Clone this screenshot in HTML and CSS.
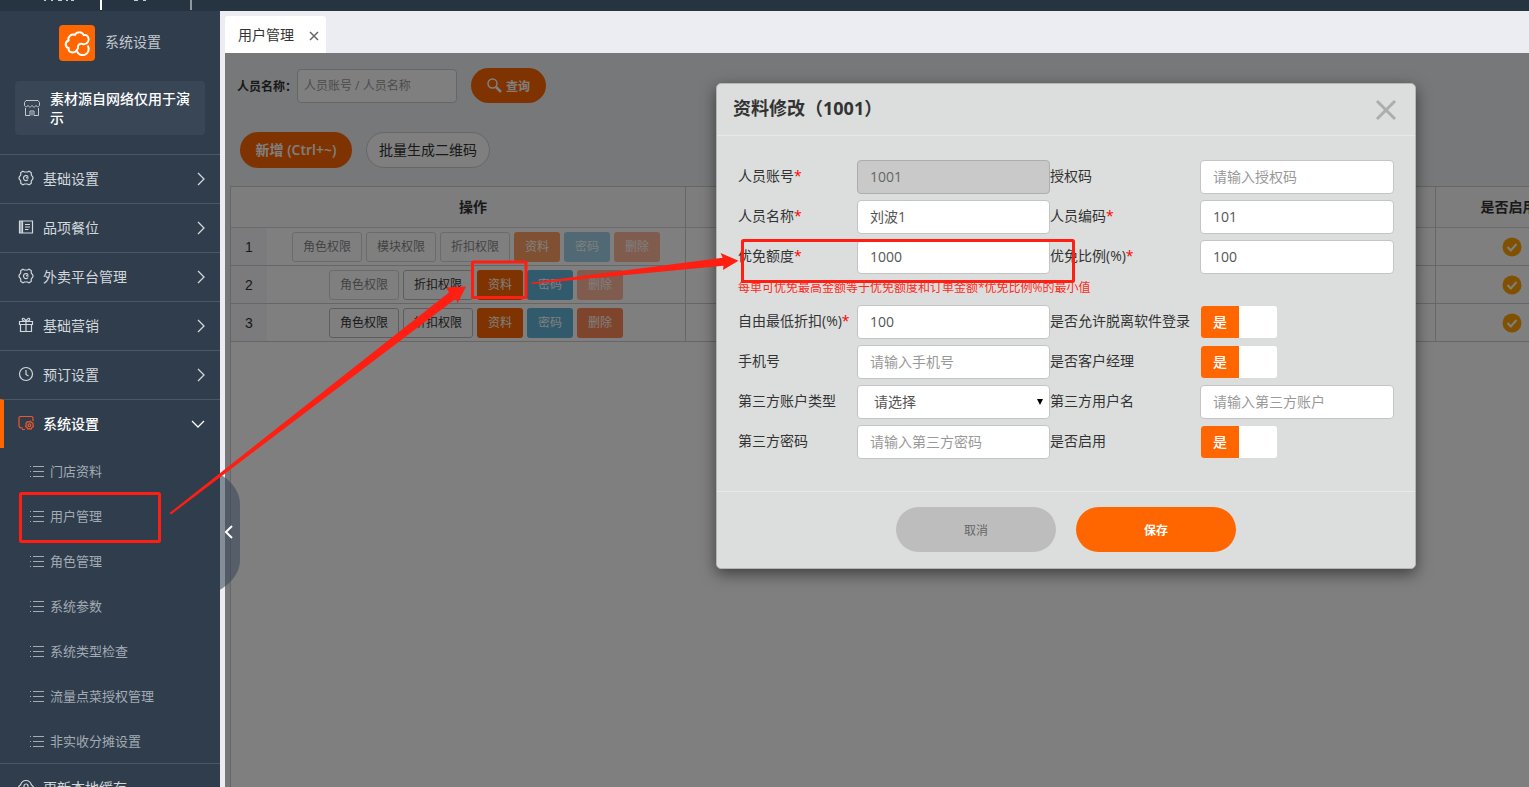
FILE: index.html
```html
<!DOCTYPE html>
<html lang="zh-CN">
<head>
<meta charset="utf-8">
<title>用户管理</title>
<link rel="stylesheet" href="styles.css">
</head>
<body>
<svg class="defs" aria-hidden="true">
  <symbol id="gear" viewBox="0 0 16 16"><path d="M5 1.2 6.500 2h3L11 1.200 13.200 2.600 13.300 5l1.600 2.200v1.600L13.300 11l-.1 2.400L11 14.800 9.500 14h-3L5 14.800 2.800 13.400 2.700 11 1.100 8.800V7.200L2.700 5l.1-2.400z"/><path d="M10.200 6.800A2.500 2.500 0 1 0 10 9.600M8 7.600l2.600.6"/></symbol>
  <symbol id="doc" viewBox="0 0 16 16"><path d="M4.500 2h10v12h-10zM4.500 14h-3V2h3M3 2v12M7 5.500h5M7 8h5M7 10.500h3.500"/></symbol>
  <symbol id="gift" viewBox="0 0 16 16"><path d="M1.500 4.500h13v3h-13zM2.500 7.500v7h11v-7M8 4.500v10M8 4.300C6 4.300 4 3.500 4.300 2S7 1.200 8 4.300C9 1.200 11.400.500 11.700 2S10 4.300 8 4.300"/></symbol>
  <symbol id="clock" viewBox="0 0 16 16"><circle cx="8" cy="8" r="6.500"/><path d="M8 4v4.500l2.500 1.500"/></symbol>
  <symbol id="system" viewBox="0 0 16 16"><path d="M5 13H3.500A2.500 2.500 0 0 1 1 10.500V3a1.500 1.500 0 0 1 1.500-1.500h11A1.500 1.500 0 0 1 15 3v3M4 14.500h3"/><path d="m9.300 6.700 1.700.3 1.500-.8.9 1.300 1.600.7-.1 1.700.6 1.500-1.500 1-.9 1.600-1.700-.4-1.600.4-.8-1.500-1.400-1 .5-1.600-.1-1.600z"/><circle cx="11.400" cy="10.200" r="1.400"/></symbol>
  <symbol id="cloud" viewBox="0 0 16 16"><path d="M3.500 13A3.700 3.700 0 0 1 2.500 6C3.500 3 5.500 1.500 8 1.500S12.500 3 13.500 6a3.700 3.700 0 0 1-1 7M6 9V7a2 2 0 0 1 4 0v2"/></symbol>
  <symbol id="next" viewBox="0 0 8 14"><path d="m1 1 6 6-6 6"/></symbol>
  <symbol id="down" viewBox="0 0 14 8"><path d="m1 1 6 6 6-6"/></symbol>
  <symbol id="list" viewBox="0 0 14 12"><path d="M3 1.500h11M3 6.500h11M3 11.500h11M0 1.500h1M0 6.500h1M0 11.500h1"/></symbol>
  <symbol id="check" viewBox="0 0 20 20"><circle cx="10" cy="10" r="9.500" fill="#ffa200"/><path d="m5.500 10 3.300 3.500L14.500 7" fill="none" stroke="#fff" stroke-width="2"/></symbol>
</svg>

<header class="topbar">
  <svg width="200" height="11" aria-hidden="true"><path d="M44 0h2v1h-2zM51 0h2v1h-2zM58 0h4v1h-4zM66 0h2v1h-2zM71 0h3v1h-3zM134 0h4v1h-4zM143 0h3v1h-3z" fill="#c6ccd2"/><path d="M101 0v10" stroke="#fff" stroke-width="2"/><path d="M191 0v10" stroke="#8f979f" stroke-width="2"/></svg>
</header>

<div class="shell">
  <aside class="sidebar">
    <div class="brand">
      <svg class="logo" width="36" height="36" viewBox="0 0 36 36" aria-hidden="true"><path d="M12.500 27.300C10 26.800 9.300 25 9.700 23.300 6 22 5.500 17 9.500 15.500 8.500 11.500 12.500 8.500 16 9.800c2-3.600 7-3.300 8.700.3 4-.8 6.300 3.400 4.300 6.700-1.400 2.400-3.500 2.800-5.600 2.200-3-.8-5.200 1.200-4.400 4.200-1.200 3-4 4.700-6.500 4.100z"/><path d="M28.700 20.500c2.300 3.500.6 8-3 9.200-3.400 1-6.500-.5-7.700-3.200"/></svg>
      <span>系统设置</span>
    </div>
    <div class="store">
      <svg width="18" height="18" viewBox="0 0 18 18" aria-hidden="true"><path d="M3 1.500h12l1.500 2V6c0 2-2.500 2.500-3.500.5-1 2-3 2-4 0-1 2-3 2-4 0C4 8.500 1.500 8 1.500 6V3.500zM2.500 9v7.500H7V12h4v4.500h4.500V9M9 13v3.500"/></svg>
      <span>素材源自网络仅用于演示</span>
    </div>
    <nav class="menu">
      <a href="#" class="item"><svg class="ico"><use href="#gear"/></svg><span>基础设置</span><svg class="next"><use href="#next"/></svg></a>
      <a href="#" class="item"><svg class="ico"><use href="#doc"/></svg><span>品项餐位</span><svg class="next"><use href="#next"/></svg></a>
      <a href="#" class="item"><svg class="ico"><use href="#gear"/></svg><span>外卖平台管理</span><svg class="next"><use href="#next"/></svg></a>
      <a href="#" class="item"><svg class="ico"><use href="#gift"/></svg><span>基础营销</span><svg class="next"><use href="#next"/></svg></a>
      <a href="#" class="item"><svg class="ico"><use href="#clock"/></svg><span>预订设置</span><svg class="next"><use href="#next"/></svg></a>
      <a href="#" class="item active"><svg class="ico"><use href="#system"/></svg><span>系统设置</span><svg class="down"><use href="#down"/></svg></a>
      <div class="submenu">
        <a href="#"><svg><use href="#list"/></svg>门店资料</a>
        <a href="#"><svg><use href="#list"/></svg>用户管理</a>
        <a href="#"><svg><use href="#list"/></svg>角色管理</a>
        <a href="#"><svg><use href="#list"/></svg>系统参数</a>
        <a href="#"><svg><use href="#list"/></svg>系统类型检查</a>
        <a href="#"><svg><use href="#list"/></svg>流量点菜授权管理</a>
        <a href="#"><svg><use href="#list"/></svg>非实收分摊设置</a>
      </div>
      <a href="#" class="item"><svg class="ico"><use href="#cloud"/></svg><span>更新本地缓存</span></a>
    </nav>
  </aside>

  <main class="main">
    <div class="tabs">
      <div class="tab"><span>用户管理</span><button type="button" aria-label="关闭标签"><svg width="10" height="10" viewBox="0 0 10 10"><path d="m1 1 8 8M9 1 1 9"/></svg></button></div>
    </div>
    <section class="content">
      <form class="search">
        <label for="keyword">人员名称：</label>
        <input id="keyword" type="text" placeholder="人员账号 / 人员名称">
        <button type="button" class="pill primary small"><svg width="15" height="15" viewBox="0 0 15 15" aria-hidden="true"><circle cx="5.500" cy="5.500" r="4.500" stroke-width="1.500"/><path d="m9 9 5 5" stroke-width="2.500"/></svg><span>查询</span></button>
      </form>
      <div class="tools">
        <button type="button" class="pill primary add">新增 (Ctrl+~)</button>
        <button type="button" class="pill plain">批量生成二维码</button>
      </div>
      <div class="grid">
        <table>
          <colgroup><col class="c-num"><col class="c-act"><col class="c-mid"><col class="c-on"></colgroup>
          <thead><tr><th></th><th class="line">操作</th><th class="line"></th><th>是否启用</th></tr></thead>
          <tbody>
            <tr><td class="num">1</td><td class="line"><div class="acts"><button type="button" disabled>角色权限</button><button type="button" disabled>模块权限</button><button type="button" disabled>折扣权限</button><button type="button" class="o" disabled>资料</button><button type="button" class="b" disabled>密码</button><button type="button" class="r" disabled>删除</button></div></td><td class="line"></td><td><svg class="check"><use href="#check"/></svg></td></tr>
            <tr><td class="num">2</td><td class="line"><div class="acts"><button type="button" disabled>角色权限</button><button type="button">折扣权限</button><button type="button" class="o">资料</button><button type="button" class="b">密码</button><button type="button" class="r" disabled>删除</button></div></td><td class="line"></td><td><svg class="check"><use href="#check"/></svg></td></tr>
            <tr><td class="num">3</td><td class="line"><div class="acts"><button type="button">角色权限</button><button type="button">折扣权限</button><button type="button" class="o">资料</button><button type="button" class="b">密码</button><button type="button" class="r">删除</button></div></td><td class="line"></td><td><svg class="check"><use href="#check"/></svg></td></tr>
          </tbody>
        </table>
      </div>
      <div class="mask"></div>
      <div class="modal" role="dialog" aria-labelledby="dlg-title">
        <div class="modal-head">
          <h2 id="dlg-title">资料修改（1001）</h2>
          <button type="button" aria-label="关闭"><svg width="22" height="22" viewBox="0 0 22 22"><path d="m2 2 18 18M20 2 2 20"/></svg></button>
        </div>
        <form class="modal-body">
          <label for="acc">人员账号<i>*</i></label><input id="acc" type="text" value="1001" disabled>
          <label for="auth">授权码</label><input id="auth" type="text" placeholder="请输入授权码">
          <label for="name">人员名称<i>*</i></label><input id="name" type="text" value="刘波1">
          <label for="code">人员编码<i>*</i></label><input id="code" type="text" value="101">
          <label for="quota">优免额度<i>*</i></label><input id="quota" type="text" value="1000">
          <label for="ratio">优免比例(%)<i>*</i></label><input id="ratio" type="text" value="100">
          <p class="hint">每单可优免最高金额等于优免额度和订单金额*优免比例%的最小值</p>
          <label for="disc">自由最低折扣(%)<i>*</i></label><input id="disc" type="text" value="100">
          <label for="sw1">是否允许脱离软件登录</label><div class="switch"><input id="sw1" type="checkbox" checked><span>是</span></div>
          <label for="tel">手机号</label><input id="tel" type="text" placeholder="请输入手机号">
          <label for="sw2">是否客户经理</label><div class="switch"><input id="sw2" type="checkbox" checked><span>是</span></div>
          <label for="type">第三方账户类型</label><div class="select"><select id="type"><option>请选择</option></select><svg width="6" height="6" viewBox="0 0 6 6" aria-hidden="true"><path d="M0 0h6L3 6z"/></svg></div>
          <label for="user3">第三方用户名</label><input id="user3" type="text" placeholder="请输入第三方账户">
          <label for="pwd3">第三方密码</label><input id="pwd3" type="text" placeholder="请输入第三方密码">
          <label for="sw3">是否启用</label><div class="switch"><input id="sw3" type="checkbox" checked><span>是</span></div>
        </form>
        <div class="modal-foot">
          <button type="button" class="cancel">取消</button>
          <button type="button" class="save">保存</button>
        </div>
      </div>
    </section>
    <button type="button" class="collapse" aria-label="收起菜单"><svg width="8" height="14" viewBox="0 0 8 14"><path d="M7 1 1 7l6 6"/></svg></button>
  </main>
</div>

<svg class="marks" width="1529" height="787" aria-hidden="true">
  <g fill="none" stroke="#ff1f12" stroke-width="3">
    <rect x="20.500" y="493.500" width="139" height="48" rx="1"/>
    <rect x="472.500" y="262" width="53.500" height="35.500" rx="1"/>
    <rect x="742.500" y="240.500" width="331" height="41" rx="1"/>
  </g>
  <g fill="#ff1f12">
    <path d="M169.500 513 449 292.500 446.500 287.500 466 286.500 457.500 303.500 456 298.500 171 514.500z"/>
    <path d="M531.500 282.500 722.700 257.700 720.500 253 738.500 260.700 723 270 723.500 265.700 531.500 284z"/>
  </g>
</svg>
</body>
</html>
```
FILE: styles.css
```css
* { box-sizing: border-box; }
body {
  margin: 0;
  height: 100vh;
  overflow: hidden;
  display: flex;
  flex-direction: column;
  position: relative;
  font: 14px/20px "Open Sans", "Noto Sans CJK SC", sans-serif;
  color: #333;
}
button, input, select { font: inherit; color: inherit; margin: 0; }
button { border: 0; padding: 0; background: none; cursor: pointer; }
a { color: inherit; text-decoration: none; }
svg { fill: none; stroke: currentColor; flex: none; display: block; }
.defs { position: absolute; width: 0; height: 0; }

.topbar { flex: none; height: 11px; background: #263442; overflow: hidden; }
.topbar svg { stroke: none; }
.shell { flex: 1; min-height: 0; display: flex; }

.sidebar {
  flex: none;
  width: 220px;
  overflow: hidden;
  background: #2f3d4d;
  color: #d3d8dc;
  position: relative;
  z-index: 2;
}
.brand { display: flex; align-items: center; justify-content: center; gap: 10px; padding-top: 14px; color: #c3c9cf; }
.brand span { padding-bottom: 2px; }
.logo { background: #f60; border-radius: 4px; stroke: #fff; stroke-width: 2; }
.store {
  margin: 20px 15px 19px;
  padding: 8px 9px 8px 8px;
  min-height: 54px;
  display: flex;
  align-items: center;
  gap: 9px;
  border-radius: 4px;
  background: #384656;
  color: #fff;
  font-weight: 500;
  line-height: 19px;
}
.store svg { color: #c3c9cf; }
.item {
  display: flex;
  align-items: center;
  height: 49px;
  padding: 0 15px 0 18px;
  border-top: 1px solid #4a5766;
}
.item span { flex: 1; margin-left: 9px; }
.ico { width: 16px; height: 16px; margin-bottom: 3px; stroke-width: 1.2; }
.next { width: 8px; height: 14px; stroke-width: 1.3; }
.down { width: 14px; height: 8px; stroke-width: 1.3; }
.active { border-left: 4px solid #f60; padding-left: 14px; color: #fff; font-weight: 500; }
.active .ico { color: #f0572a; }
.submenu a {
  display: flex;
  align-items: center;
  gap: 6px;
  height: 45px;
  padding-left: 30px;
  font-size: 13px;
  color: #a3abb3;
}
.submenu svg { width: 14px; height: 12px; }

.main {
  flex: 1;
  min-width: 0;
  position: relative;
  display: flex;
  flex-direction: column;
  padding-left: 5px;
  background: #ebedf2;
}
.tabs { flex: none; padding-top: 5px; display: flex; }
.tab {
  display: flex;
  align-items: center;
  gap: 15px;
  height: 37px;
  padding: 0 7px 0 13px;
  border-radius: 3px 3px 0 0;
  background: #fff;
}
.tab button { color: #666; stroke-width: 1.5; margin-top: 2px; }
.content {
  flex: 1;
  min-height: 0;
  position: relative;
  overflow: hidden;
  display: flex;
  flex-direction: column;
  background: #eef1f3;
}
.search { display: flex; align-items: center; padding: 15px 0 0 12px; }
.search label { width: 60px; padding-top: 3px; font-size: 12px; font-weight: 700; white-space: nowrap; }
.search input {
  width: 160px;
  height: 34px;
  padding: 0 6px;
  border: 1px solid #ccc;
  border-radius: 4px;
  background: #fff;
  font-size: 12px;
}
.search .pill { margin-left: 14px; }
input::placeholder { color: #999; opacity: 1; }
.pill { height: 36px; padding: 0 12px; border-radius: 18px; white-space: nowrap; }
.primary { background: #f60; color: #fff; font-weight: 600; }
.plain { min-width: 124px; border: 1px solid #ccc; background: #fff; }
.add { min-width: 112px; }
.small { display: flex; align-items: center; justify-content: center; gap: 4px; width: 75px; height: 35px; padding: 0; font-size: 12px; }
.small span { padding-top: 2px; }
.tools { display: flex; gap: 14px; padding: 29px 0 18px 15px; }
.grid { flex: 1; margin-left: 5px; background: #fff; border: solid #ccc; border-width: 1px 0 0 1px; }
table { width: 1356px; table-layout: fixed; border-collapse: separate; border-spacing: 0; }
.c-num { width: 36px; }
.c-act { width: 419px; }
.c-mid { width: 750px; }
.c-on { width: 151px; }
th { height: 41px; padding: 0 6px 0 0; border-bottom: 1px solid #d5d5d5; background: #fafafd; font-weight: 700; }
td { height: 38px; padding: 0; border-bottom: 1px solid #ccc; text-align: center; }
.line { border-right: 1px solid #ccc; }
.num { background: #f7f7fa; font-family: "Liberation Sans", sans-serif; }
.acts { display: flex; justify-content: center; gap: 4px; }
.acts button {
  height: 30px;
  padding: 0 10px;
  border: 1px solid #bbb;
  border-radius: 3px;
  background: #fff;
  font-size: 12px;
}
.acts button:disabled { opacity: .6; }
.acts .o, .acts .b, .acts .r { border: 0; padding: 0 11px; color: #fff; }
.acts .o { background: #f60; }
.acts .b { background: #62b5d9; }
.acts .r { background: #ff8a58; }
.check { width: 20px; height: 20px; margin: 0 auto; stroke: none; }

.mask { position: absolute; inset: 0; background: rgba(0, 0, 0, .5); }
.modal {
  position: absolute;
  left: 491px;
  top: 30px;
  width: 700px;
  border: 1px solid #b4b6b5;
  border-radius: 5px;
  background: #dcdedd;
  box-shadow: 0 5px 15px rgba(0, 0, 0, .5);
}
.modal-head {
  display: flex;
  justify-content: space-between;
  align-items: center;
  height: 52px;
  padding: 0 18px 0 16px;
  border-bottom: 1px solid #e7e8e8;
}
h2 { margin: 0 0 3px; font-size: 18px; line-height: 26px; }
.modal-head button { color: #acaeae; }
.modal-head svg { stroke-width: 3; }
.modal-body {
  display: grid;
  grid-template-columns: 119px 193px 150px 194px;
  row-gap: 6px;
  padding: 24px 21px 32px;
}
.modal-body label { line-height: 32px; white-space: nowrap; }
.modal-body i { color: red; font-style: normal; }
.modal-body > input, .select select {
  width: 100%;
  height: 34px;
  padding: 0 12px;
  border: 1px solid #c4c4c4;
  border-radius: 4px;
  background: #fff;
  color: #555;
}
.modal-body > input { padding-bottom: 2px; }
.modal-body > input:disabled { background: #c9c9c9; border-color: #adadad; color: #666; }
.hint { grid-column: 1 / -1; margin: -2px 0 1px; font-size: 12px; line-height: 20px; color: #ff2a1a; }
.select { position: relative; }
.select select { appearance: none; padding: 0 16px; }
.select svg { position: absolute; right: 7px; top: 14px; fill: #000; stroke: none; }
.switch {
  position: relative;
  width: 76px;
  height: 32px;
  margin: 1px;
  border-radius: 3px;
  background: #fff;
  overflow: hidden;
}
.switch input { position: absolute; inset: 0; width: 100%; height: 100%; opacity: 0; }
.switch span { display: block; width: 38px; line-height: 32px; text-align: center; background: #f60; color: #fff; font-weight: 500; }
.modal-foot { display: flex; justify-content: center; gap: 20px; padding: 15px 0 16px; border-top: 1px solid #e7e8e8; }
.modal-foot button { width: 160px; height: 45px; padding-top: 2px; border-radius: 23px; font-size: 12px; }
.cancel { background: #bdbdbd; color: #666; }
.save { background: #f60; color: #fff; font-weight: 700; }

.collapse {
  position: absolute;
  left: -40px;
  top: 453px;
  width: 60px;
  height: 136px;
  padding-left: 45px;
  border-radius: 0 60px 60px 0 / 0 40px 40px 0;
  background: rgba(54, 68, 88, .57);
  color: #fff;
  stroke-width: 2;
}
.marks { position: absolute; left: 0; top: 0; z-index: 5; pointer-events: none; stroke: none; }
```
